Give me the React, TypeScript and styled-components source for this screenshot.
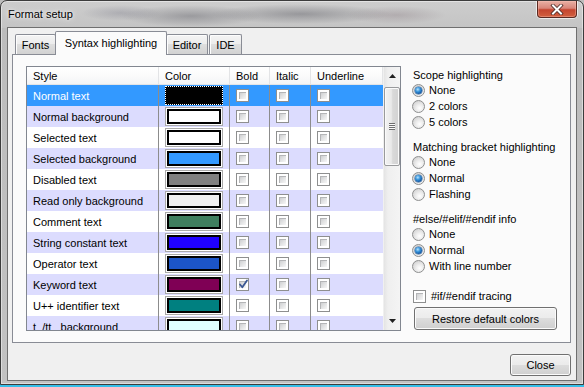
import React from "react";
import styled, { createGlobalStyle, css } from "styled-components";

const Global = createGlobalStyle`
  html, body { margin: 0; padding: 0; }
  body {
    width: 584px;
    height: 387px;
    overflow: hidden;
    background: linear-gradient(to bottom, #bdbdbd 0, #bdbdbd 384px, #35bfe9 384px);
    font-family: "Liberation Sans", Arial, sans-serif;
    font-size: 11px;
    color: #000;
  }
  * { box-sizing: border-box; }
`;

const Window = styled.div`
  width: 584px;
  height: 385px;
  border: 1px solid #3c3c3c;
  border-radius: 7px 7px 0 0;
  padding: 0 6px 3px;
  display: flex;
  flex-direction: column;
  overflow: hidden;
  box-shadow: inset 0 0 0 1px rgba(255, 255, 255, 0.45);
  background:
    radial-gradient(ellipse 70px 11px at 190px 15px, rgba(70, 70, 80, 0.35), transparent),
    radial-gradient(ellipse 90px 10px at 300px 13px, rgba(60, 60, 70, 0.35), transparent),
    radial-gradient(ellipse 50px 9px at 395px 14px, rgba(110, 90, 100, 0.25), transparent),
    radial-gradient(ellipse 40px 8px at 120px 12px, rgba(90, 90, 110, 0.25), transparent),
    linear-gradient(to bottom, #cdcdcd 0, #c4c4c4 27px, #bcbcbc 27px, #c2c2c2 100%);
`;

const TitleBar = styled.div`
  height: 26px;
  display: flex;
  align-items: flex-start;
  padding-left: 1px;
`;

const TitleText = styled.span`
  margin-top: 7px;
  font-size: 11px;
  color: #000;
  text-shadow: 0 0 6px rgba(255, 255, 255, 0.9), 0 0 3px rgba(255, 255, 255, 0.8);
`;

const CloseX = styled.div`
  margin-left: auto;
  width: 40px;
  height: 17px;
  border: 1px solid #5b2a22;
  border-top: none;
  border-radius: 0 0 4px 4px;
  box-shadow: 0 0 0 1px rgba(255, 255, 255, 0.65), inset 0 0 0 1px rgba(255, 200, 190, 0.35);
  background: linear-gradient(to bottom, #e9b0a4 0%, #d8867a 45%, #c4452f 55%, #d2603f 100%);
  display: flex;
  align-items: center;
  justify-content: center;
`;

const Client = styled.div`
  flex: 1;
  border: 1px solid #6f6f6f;
  background: #f0f0f0;
  padding: 3px 5px 4px 4px;
  display: flex;
  flex-direction: column;
`;

const TabRow = styled.div`
  height: 24px;
  margin-bottom: -1px;
  display: flex;
  align-items: flex-end;
  position: relative;
  z-index: 1;
`;

const Tab = styled.div<{ $active?: boolean; $w: number; $ml: number }>`
  width: ${(p) => p.$w}px;
  margin-left: ${(p) => p.$ml}px;
  display: flex;
  align-items: center;
  justify-content: center;
  border: 1px solid #898c95;
  border-bottom: none;
  border-radius: 2px 2px 0 0;
  white-space: nowrap;
  ${(p) =>
    p.$active
      ? css`
          height: 24px;
          background: #fbfbfb;
          position: relative;
          z-index: 2;
          padding-bottom: 1px;
        `
      : css`
          height: 20px;
          margin-bottom: 1px;
          background: linear-gradient(to bottom, #f4f4f4 0%, #ececec 50%, #dedede 50%, #d2d2d2 100%);
          box-shadow: inset 1px 1px 0 #fdfdfd;
        `}
`;

const Panel = styled.div`
  height: 289px;
  border: 1px solid #898c95;
  background: #fbfbfb;
  padding: 11px 12px 11px 13px;
  display: flex;
  gap: 11px;
`;

const ListBox = styled.div`
  width: 375px;
  height: 265px;
  border: 1px solid #828790;
  background: #fff;
  display: flex;
  overflow: hidden;
`;

const Table = styled.div`
  width: 356px;
  display: flex;
  flex-direction: column;
  overflow: hidden;
`;

const HeaderRow = styled.div`
  height: 18px;
  flex-shrink: 0;
  display: flex;
  background: linear-gradient(to bottom, #ffffff 0%, #fbfbfb 50%, #f3f4f6 100%);
  border-bottom: 1px solid #e3e4e6;
`;

const HeaderCell = styled.div<{ $w: number; $sep?: boolean }>`
  width: ${(p) => p.$w}px;
  flex-shrink: 0;
  padding-left: 6px;
  display: flex;
  align-items: center;
  border-right: ${(p) => (p.$sep ? "1px solid #e3e4e6" : "none")};
  color: #000;
`;

const Row = styled.div<{ $bg: string; $sel?: boolean }>`
  height: 21px;
  flex-shrink: 0;
  display: flex;
  background: ${(p) => p.$bg};
  color: ${(p) => (p.$sel ? "#fff" : "#000")};
`;

const Cell = styled.div<{ $w: number; $sep?: boolean }>`
  width: ${(p) => p.$w}px;
  flex-shrink: 0;
  padding-left: 6px;
  display: flex;
  align-items: center;
  white-space: nowrap;
  overflow: hidden;
  border-right: ${(p) => (p.$sep ? "1px solid #8c8c8c" : "none")};
`;

const Swatch = styled.span<{ $focus?: boolean }>`
  width: 58px;
  height: 19px;
  padding: 1px;
  display: flex;
  border: ${(p) => (p.$focus ? "1px dotted #ffffff" : "1px solid #a9a9a9")};
  background: ${(p) => (p.$focus ? "#000" : "#fff")};
`;

const SwatchFill = styled.span`
  flex: 1;
  border: 2px solid #000;
`;

const Check = styled.span<{ $checked?: boolean }>`
  width: 13px;
  height: 13px;
  flex-shrink: 0;
  border: 1px solid #8e8f8f;
  background: #fff;
  position: relative;
  display: inline-block;
  &::after {
    content: "";
    position: absolute;
    inset: 2px;
    background: linear-gradient(135deg, #c8c9cb 0%, #dedfe0 45%, #f7f7f7 100%);
    box-shadow: inset 1px 1px 0 #b4b5b7;
  }
  svg {
    position: absolute;
    left: 1px;
    top: 0px;
    z-index: 1;
  }
`;

const ScrollBar = styled.div`
  width: 17px;
  display: flex;
  flex-direction: column;
  background: linear-gradient(to right, #e4e4e4 0%, #efefef 25%, #f4f4f4 100%);
  border-left: 1px solid #f0f0f0;
`;

const ScrollArrow = styled.div`
  height: 18px;
  flex-shrink: 0;
  display: flex;
  align-items: center;
  justify-content: center;
`;

const Track = styled.div`
  flex: 1;
  padding-top: 2px;
`;

const Thumb = styled.div`
  height: 79px;
  margin: 0 0 0 0;
  border: 1px solid #999a9c;
  border-radius: 2px;
  background: linear-gradient(to right, #f3f3f3 0%, #e9e9e9 45%, #d9d9d9 55%, #d2d2d2 100%);
  box-shadow: inset 0 0 0 1px #fafafa;
  display: flex;
  align-items: center;
  justify-content: center;
`;

const Grip = styled.span`
  width: 6px;
  height: 7px;
  background: repeating-linear-gradient(to bottom, #6e6e6e 0, #6e6e6e 1px, #fafafa 1px, #fafafa 2px);
`;

const Side = styled.div`
  flex: 1;
  display: flex;
  flex-direction: column;
  padding-top: 1px;
  gap: 9px;
`;

const Group = styled.div`
  display: flex;
  flex-direction: column;
`;

const GroupLabel = styled.div`
  height: 15px;
  padding-left: 1px;
  display: flex;
  align-items: center;
  white-space: nowrap;
`;

const RadioRow = styled.div`
  height: 16px;
  display: flex;
  align-items: center;
  gap: 4px;
`;

const Radio = styled.span<{ $checked?: boolean }>`
  width: 13px;
  height: 13px;
  border-radius: 50%;
  border: 1px solid #8e8f8f;
  background: radial-gradient(circle at 60% 65%, #ffffff 0%, #eeeeee 35%, #d6d6d6 75%, #cfcfcf 100%);
  position: relative;
  flex-shrink: 0;
  ${(p) =>
    p.$checked &&
    css`
      &::after {
        content: "";
        position: absolute;
        left: 2px;
        top: 2px;
        width: 7px;
        height: 7px;
        border-radius: 50%;
        background: radial-gradient(circle at 40% 35%, #b9e4ff 0%, #3c98dd 35%, #135aa6 70%, #0c3f80 100%);
        box-shadow: 0 0 0 0.5px #2a5d94;
      }
    `}
`;

const CheckRow = styled.div`
  height: 16px;
  margin-top: 5px;
  padding-left: 1px;
  display: flex;
  align-items: center;
  gap: 5px;
`;

const Button = styled.div<{ $w: number; $h: number }>`
  width: ${(p) => p.$w}px;
  height: ${(p) => p.$h}px;
  border: 1px solid #707070;
  border-radius: 3px;
  background: linear-gradient(to bottom, #f2f2f2 0%, #ebebeb 50%, #dddddd 50%, #cfcfcf 100%);
  box-shadow: inset 0 0 0 1px #fbfbfb;
  display: flex;
  align-items: center;
  justify-content: center;
  white-space: nowrap;
`;

const RestoreWrap = styled.div`
  margin-top: -6px;
  padding-left: 2px;
`;

const BottomBar = styled.div`
  margin-top: 11px;
  display: flex;
  justify-content: flex-end;
`;

const cols = [132, 71, 40, 41, 72];

const rows: { name: string; color: string; bold?: boolean }[] = [
  { name: "Normal text", color: "#000000" },
  { name: "Normal background", color: "#ffffff" },
  { name: "Selected text", color: "#ffffff" },
  { name: "Selected background", color: "#3399ff" },
  { name: "Disabled text", color: "#808080" },
  { name: "Read only background", color: "#f0f0f0" },
  { name: "Comment text", color: "#3f7f5f" },
  { name: "String constant text", color: "#2000ff" },
  { name: "Operator text", color: "#1c55c8" },
  { name: "Keyword text", color: "#7f0055", bold: true },
  { name: "U++ identifier text", color: "#008080" },
  { name: "t_/tt_ background", color: "#e0ffff" },
];

const CheckMark = () => (
  <svg width="11" height="11" viewBox="0 0 11 11">
    <path d="M2 5.5 L4.3 8.3 L9 1.5" fill="none" stroke="#3a5793" strokeWidth="1.8" strokeLinecap="round" strokeLinejoin="round" />
  </svg>
);

const Box = ({ checked }: { checked?: boolean }) => (
  <Check $checked={checked}>{checked && <CheckMark />}</Check>
);

const groups = [
  { label: "Scope highlighting", options: ["None", "2 colors", "5 colors"], sel: 0 },
  { label: "Matching bracket highlighting", options: ["None", "Normal", "Flashing"], sel: 1 },
  { label: "#else/#elif/#endif info", options: ["None", "Normal", "With line number"], sel: 1 },
];

export default function App() {
  return (
    <>
      <Global />
      <Window>
        <TitleBar>
          <TitleText>Format setup</TitleText>
          <CloseX>
            <svg width="14" height="11" viewBox="0 0 14 11">
              <path d="M3 1.5 L11 9.5 M11 1.5 L3 9.5" stroke="#4a2a26" strokeWidth="3.6" strokeLinecap="square" />
              <path d="M3 1.5 L11 9.5 M11 1.5 L3 9.5" stroke="#ffffff" strokeWidth="2" strokeLinecap="square" />
            </svg>
          </CloseX>
        </TitleBar>
        <Client>
          <TabRow>
            <Tab $w={41} $ml={3}>Fonts</Tab>
            <Tab $w={112} $ml={-1} $active>Syntax highlighting</Tab>
            <Tab $w={42} $ml={-1}>Editor</Tab>
            <Tab $w={33} $ml={1}>IDE</Tab>
          </TabRow>
          <Panel>
            <ListBox>
              <Table>
                <HeaderRow>
                  <HeaderCell $w={cols[0]} $sep>Style</HeaderCell>
                  <HeaderCell $w={cols[1]} $sep>Color</HeaderCell>
                  <HeaderCell $w={cols[2]} $sep>Bold</HeaderCell>
                  <HeaderCell $w={cols[3]} $sep>Italic</HeaderCell>
                  <HeaderCell $w={cols[4]} $sep>Underline</HeaderCell>
                </HeaderRow>
                {rows.map((r, i) => {
                  const sel = i === 0;
                  const bg = sel ? "#3399ff" : i % 2 === 1 ? "#dcdcfe" : "#ffffff";
                  return (
                    <Row key={r.name} $bg={bg} $sel={sel}>
                      <Cell $w={cols[0]} $sep>{r.name}</Cell>
                      <Cell $w={cols[1]} $sep>
                        <Swatch $focus={sel}>
                          <SwatchFill style={{ background: r.color }} />
                        </Swatch>
                      </Cell>
                      <Cell $w={cols[2]} $sep><Box checked={r.bold} /></Cell>
                      <Cell $w={cols[3]} $sep><Box /></Cell>
                      <Cell $w={cols[4]}><Box /></Cell>
                    </Row>
                  );
                })}
              </Table>
              <ScrollBar>
                <ScrollArrow>
                  <svg width="7" height="4" viewBox="0 0 7 4"><path d="M0 4 L3.5 0 L7 4 Z" fill="#202020" /></svg>
                </ScrollArrow>
                <Track>
                  <Thumb><Grip /></Thumb>
                </Track>
                <ScrollArrow>
                  <svg width="7" height="4" viewBox="0 0 7 4"><path d="M0 0 L7 0 L3.5 4 Z" fill="#202020" /></svg>
                </ScrollArrow>
              </ScrollBar>
            </ListBox>
            <Side>
              {groups.map((g) => (
                <Group key={g.label}>
                  <GroupLabel>{g.label}</GroupLabel>
                  {g.options.map((o, i) => (
                    <RadioRow key={o}>
                      <Radio $checked={i === g.sel} />
                      {o}
                    </RadioRow>
                  ))}
                </Group>
              ))}
              <CheckRow>
                <Box />
                #if/#endif tracing
              </CheckRow>
              <RestoreWrap>
                <Button $w={143} $h={23}>Restore default colors</Button>
              </RestoreWrap>
            </Side>
          </Panel>
          <BottomBar>
            <Button $w={61} $h={22}>Close</Button>
          </BottomBar>
        </Client>
      </Window>
    </>
  );
}
